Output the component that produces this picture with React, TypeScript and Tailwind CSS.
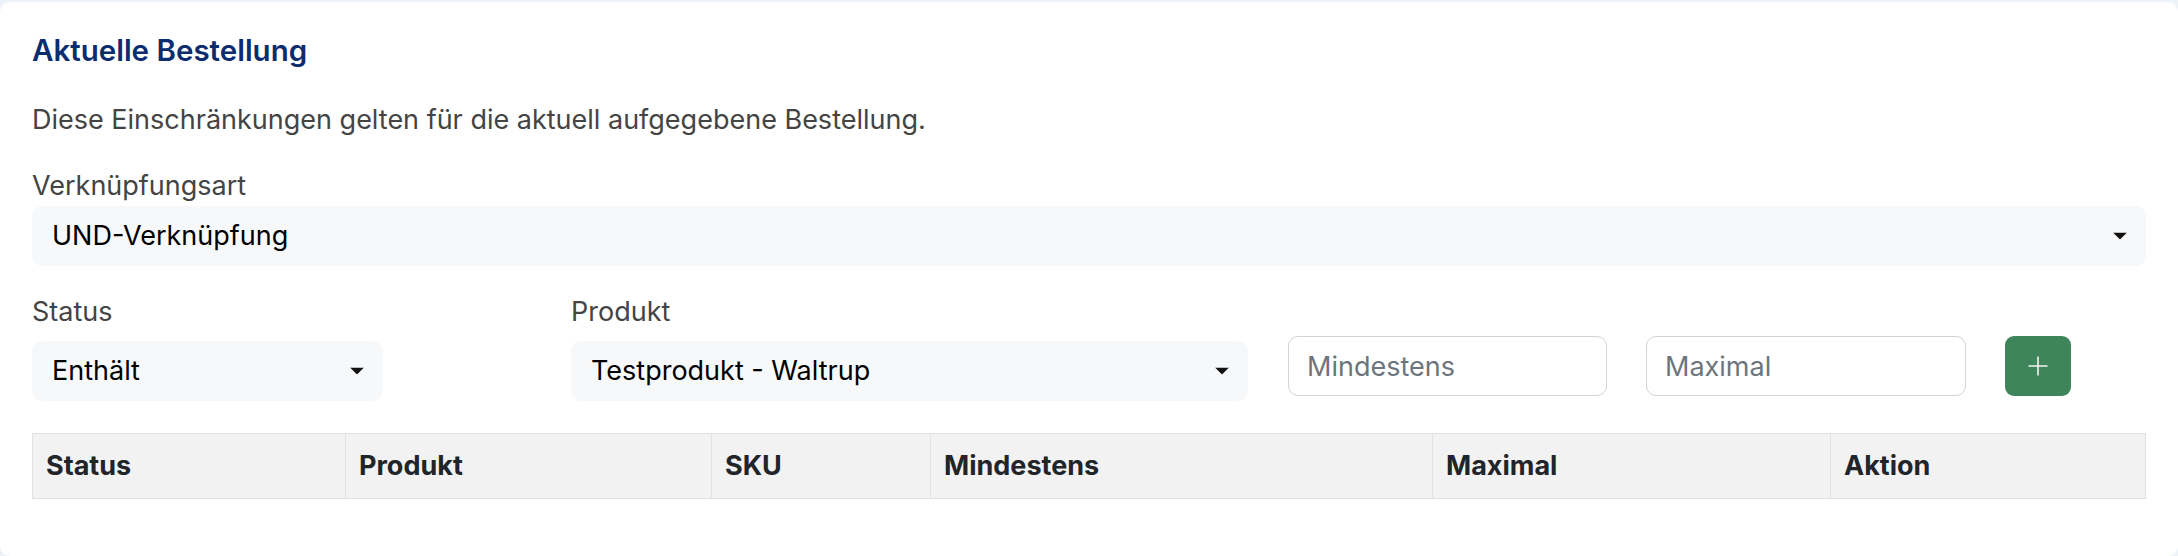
import React from "react";

function Caret() {
  return (
    <svg width="14" height="7" viewBox="0 0 14 7" className="absolute right-[19px] top-1/2 -translate-y-1/2">
      <path d="M0 0 L14 0 L7 7 Z" fill="#111" />
    </svg>
  );
}

function SelectBox({ children }: { children: React.ReactNode }) {
  return (
    <div className="relative flex h-[60px] items-center rounded-[10px] bg-[#f7f8fa] pl-[20px] text-[27px] leading-[36px] text-black">
      <span>{children}</span>
      <Caret />
    </div>
  );
}

const headers: { label: string; w: string }[] = [
  { label: "Status", w: "w-[313px]" },
  { label: "Produkt", w: "w-[366px]" },
  { label: "SKU", w: "w-[219px]" },
  { label: "Mindestens", w: "w-[502px]" },
  { label: "Maximal", w: "w-[398px]" },
  { label: "Aktion", w: "" },
];

export default function App() {
  return (
    <div className="min-h-screen bg-[#eef2f9] pt-[2px] font-['Inter','Noto_Sans',sans-serif]">
      <div className="h-[554px] rounded-[10px] bg-white px-[32px] pt-[28px]">
        <h2 className="h-[40px] text-[29.5px] leading-[40px] font-semibold text-[#0b2d6f]">Aktuelle Bestellung</h2>
        <p className="mt-[32px] h-[36px] text-[27px] leading-[36px] text-[#444]">
          Diese Einschränkungen gelten für die aktuell aufgegebene Bestellung.
        </p>
        <div className="mt-[30px] h-[36px] text-[27px] leading-[36px] text-[#444]">Verknüpfungsart</div>
        <div className="mt-[2px]">
          <SelectBox>UND-Verknüpfung</SelectBox>
        </div>
        <div className="mt-[28px] flex items-end">
          <div className="w-[351px]">
            <div className="h-[36px] text-[27px] leading-[36px] text-[#444]">Status</div>
            <div className="mt-[11px]">
              <SelectBox>Enthält</SelectBox>
            </div>
          </div>
          <div className="ml-[188px] w-[677px]">
            <div className="h-[36px] text-[27px] leading-[36px] text-[#444]">Produkt</div>
            <div className="mt-[11px]">
              <SelectBox>Testprodukt - Waltrup</SelectBox>
            </div>
          </div>
          <input
            placeholder="Mindestens"
            className="mb-[5px] ml-[40px] h-[60px] w-[319px] rounded-[10px] border border-[#ced4da] bg-white px-[18px] text-[27px] text-black placeholder:text-[#6c757d] outline-none"
          />
          <input
            placeholder="Maximal"
            className="mb-[5px] ml-[39px] h-[60px] w-[320px] rounded-[10px] border border-[#ced4da] bg-white px-[18px] text-[27px] text-black placeholder:text-[#6c757d] outline-none"
          />
          <button className="mb-[5px] ml-[39px] flex h-[60px] w-[66px] items-center justify-center rounded-[9px] bg-[#3f855b]">
            <svg width="20" height="20" viewBox="0 0 20 20">
              <path d="M10 0.5 V19.5 M0.5 10 H19.5" stroke="#f4f4f4" strokeWidth="1.6" />
            </svg>
          </button>
        </div>
        <table className="mt-[32px] w-full border-collapse text-left text-[27px] font-bold text-[#212529]">
          <thead>
            <tr className="h-[65px] bg-[#f2f2f2]">
              {headers.map((h) => (
                <th key={h.label} className={`${h.w} border border-[#dee2e6] px-[13px] leading-[36px]`}>
                  {h.label}
                </th>
              ))}
            </tr>
          </thead>
        </table>
      </div>
    </div>
  );
}
